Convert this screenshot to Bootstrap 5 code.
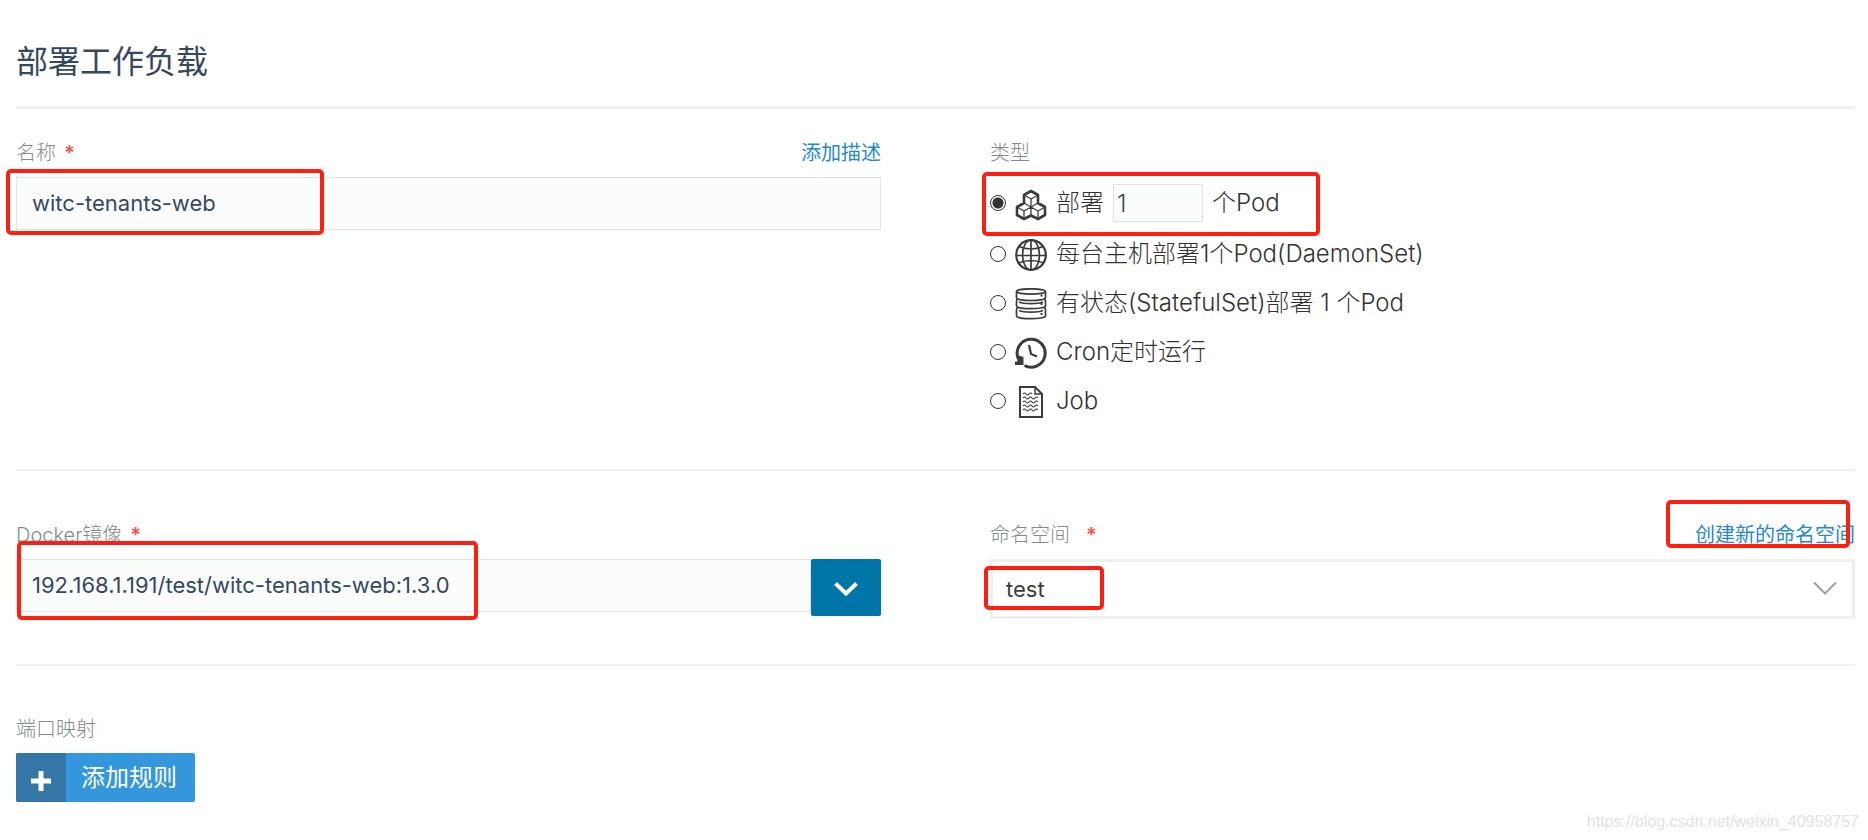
<!DOCTYPE html>
<html lang="zh-CN">
<head>
<meta charset="utf-8">
<meta name="viewport" content="width=device-width, initial-scale=1">
<title>部署工作负载</title>
<link href="https://cdn.jsdelivr.net/npm/bootstrap@5.3.0/dist/css/bootstrap.min.css" rel="stylesheet">
<style>
  body { font-family: Inter, "Noto Sans CJK SC", sans-serif; font-weight: 400; color: #3d3d3d; background: #fff; }
  .page { padding: 40px 13px 0 16px; }
  .page-title { font-size: 32px; line-height: 44px; font-weight: 400; color: #34495e; margin: 0; padding-bottom: 22px; border-bottom: 3px solid #ecf0f1; }
  .field-grid { display: grid; grid-template-columns: 1fr 1fr; column-gap: 109px; row-gap: 24px; }
  .section-line { border-bottom: 2px solid #ecf0f1; }
  .sec-first { padding: 29px 0 44px; }
  .sec-second { padding: 49px 0 45px; }
  .sec-third { padding: 48px 0 0; }
  .caption { font-size: 20px; line-height: 30px; color: #7f8c8d; font-weight: 300; }
  .caption-row { margin-bottom: 9px; }
  .req { color: #f0504e; font-weight: 600; margin-left: 8px; }
  .req-wide { margin-left: 16px; }
  .act { font-size: 20px; line-height: 30px; color: #2688cd; text-decoration: none; }
  .text-field { height: 53px; font-size: 22px; font-weight: 400; color: #34495e; background: #fbfdfd; border: 1px solid #dce4e4; border-radius: 0; padding: 0 15px 2px; }
  .pick-field { height: 60px; font-size: 22px; font-weight: 400; color: #3d3d3d; background: #fff; border: 3px solid #ecf0f1; border-radius: 0; padding: 0 56px 0 13px; appearance: none; }
  .pick-arrow { right: 18px; top: 22px; pointer-events: none; }
  .drop-btn { width: 70px; height: 57px; background: #0075a8; border: 0; border-radius: 2px; color: #fff; }
  .kind { height: 49px; font-size: 24px; line-height: 32px; font-weight: 300; color: #333; }
  .kind-first { height: 52px; }
  .kind input[type=radio] { appearance: none; width: 16px; height: 16px; margin: 0 9px 0 0; border: 1px solid #333; border-radius: 50%; background: #fff; flex: none; }
  .kind input[type=radio]:checked { background: radial-gradient(circle, #333 5px, #fff 6px); }
  .kind svg { width: 32px; height: 32px; margin-right: 9px; margin-top: 3px; flex: none; }
  .count-field { width: 90px; height: 38px; font-size: 24px; font-weight: 300; color: #34495e; background: #fbfdfd; border: 1px solid #dce4e4; border-radius: 0; padding: 0 3px; margin: 0 9px; appearance: textfield; }
  .count-field::-webkit-inner-spin-button { appearance: none; }
  .rule-btn { height: 49px; font-size: 24px; font-weight: 400; line-height: 50px; color: #fff; background: #3497db; border: 0; border-radius: 2px; overflow: hidden; }
  .rule-btn .plus { width: 50px; background: #3477a7; padding-top: 7px; }
  .rule-btn .txt { padding: 0 18px 0 15px; }
  .hl { position: absolute; border: 4px solid #ff1e10; border-radius: 5px; pointer-events: none; z-index: 2; }
  .hl-name { left: -10px; top: 31px; width: 318px; height: 66px; }
  .hl-kind { left: -8px; top: 34px; width: 338px; height: 64px; }
  .hl-image { left: 1px; top: 21px; width: 461px; height: 79px; }
  .hl-space { left: -6px; top: 46px; width: 120px; height: 44px; }
  .hl-create { right: 5px; top: -20px; width: 184px; height: 48px; }
  .site-mark { font-family: "Liberation Sans", sans-serif; font-size: 16px; font-weight: 400; line-height: 20px; color: #e2e2e2; padding: 10px 9px 0 0; }
  @media (max-width: 900px) { .field-grid { grid-template-columns: 1fr; } }
</style>
</head>
<body>
<main>
<form class="page">
  <h1 class="page-title">部署工作负载</h1>

  <section class="field-grid section-line sec-first">
    <div class="position-relative">
      <div class="caption-row d-flex justify-content-between">
        <label class="caption" for="name">名称<span class="req">*</span></label>
        <a class="act" href="#">添加描述</a>
      </div>
      <input id="name" type="text" class="text-field form-control" value="witc-tenants-web">
      <div class="hl hl-name"></div>
    </div>
    <div class="position-relative">
      <div class="caption-row caption">类型</div>
      <div class="kind kind-first d-flex align-items-center">
        <input type="radio" name="kind" id="k1" checked>
        <label class="d-flex align-items-center" for="k1">
          <svg viewBox="0 0 32 32" fill="none" stroke="#3b3b3b" stroke-linejoin="round"><path stroke-width="2.600" d="M16 2l7 4v8l7 4v8l-7 4-7-3.500L9 30l-7-4v-8l7-4V6z"/><path stroke-width="1.300" d="M9 6l7 4 7-4M16 10v8M9 14l7 4 7-4M2 18l7 4 7-4M9 22v8M16 18v8M16 18l7 4 7-4M23 22v8"/></svg>
          <span>部署</span>
        </label>
        <input type="number" class="count-field" value="1" aria-label="Pod 数量"><span>个Pod</span>
      </div>
      <div class="kind d-flex align-items-center">
        <input type="radio" name="kind" id="k2">
        <label class="d-flex align-items-center" for="k2">
          <svg viewBox="0 0 32 32" fill="none" stroke="#3b3b3b" stroke-width="1.700"><circle cx="16" cy="16" r="14.800" stroke-width="2.200"/><ellipse cx="16" cy="16" rx="8.500" ry="15"/><path d="M16 1v30M1 16.500h30M4 7.500q12 5 24 0M3.500 24q12.500-5 25 0"/></svg>
          <span>每台主机部署1个Pod(DaemonSet)</span>
        </label>
      </div>
      <div class="kind d-flex align-items-center">
        <input type="radio" name="kind" id="k3">
        <label class="d-flex align-items-center" for="k3">
          <svg viewBox="0 0 32 32" fill="none" stroke="#3b3b3b" stroke-width="1.700"><ellipse cx="16" cy="3.500" rx="14.500" ry="2.700"/><path d="M1.500 3.500v6.300c0 3.600 29 3.600 29 0V3.500M3 11.500q-1.500 0-1.500 1.500v5c0 3.600 29 3.600 29 0v-5q0-1.500-1.500-1.500M3 20q-1.500 0-1.500 1.500V28c0 3.600 29 3.600 29 0v-6.500q0-1.500-1.500-1.500M4 14c5 2.200 19 2.200 24 0M4 22.500c5 2.200 19 2.200 24 0"/><path stroke-width="2" d="M25.500 7.500h2M25.500 16h2M25.500 26h2"/></svg>
          <span>有状态(StatefulSet)部署 1 个Pod</span>
        </label>
      </div>
      <div class="kind d-flex align-items-center">
        <input type="radio" name="kind" id="k4">
        <label class="d-flex align-items-center" for="k4">
          <svg viewBox="0 0 32 32" fill="none" stroke="#3b3b3b" stroke-width="3"><path d="M3.200 21.500A14 14 0 1 1 9.500 28.500"/><path stroke-width="2.200" d="M14 8l2 9 6 2.500"/><path fill="#3b3b3b" stroke="none" d="M1.500 18l7 2v8H0v-3.500h2.500z"/></svg>
          <span>Cron定时运行</span>
        </label>
      </div>
      <div class="kind d-flex align-items-center">
        <input type="radio" name="kind" id="k5">
        <label class="d-flex align-items-center" for="k5">
          <svg viewBox="0 0 32 32" fill="none" stroke="#3b3b3b" stroke-width="2"><path d="M5 1h15l7 7v23H5z"/><path stroke-width="1.500" d="M20 1v7h7"/><path stroke-width="1.200" d="M8 8q1.500-2 3 0t3 0 3 0M8 12q1.500-2 3 0t3 0 3 0 3 0 3 0M8 16q1.500-2 3 0t3 0 3 0 3 0 3 0M8 20q1.500-2 3 0t3 0 3 0 3 0 3 0M8 24q1.500-2 3 0t3 0 3 0 3 0 3 0"/></svg>
          <span>Job</span>
        </label>
      </div>
      <div class="hl hl-kind"></div>
    </div>
  </section>

  <section class="field-grid section-line sec-second">
    <div class="position-relative">
      <div class="caption-row"><label class="caption d-block" for="image">Docker镜像<span class="req">*</span></label></div>
      <div class="d-flex align-items-start">
        <input id="image" type="text" class="text-field form-control" value="192.168.1.191/test/witc-tenants-web:1.3.0">
        <button type="button" class="drop-btn flex-shrink-0" aria-label="选择镜像">
          <svg width="26" height="18" viewBox="0 0 26 18" fill="none" stroke="#fff" stroke-width="4"><path d="M2.500 3.500L13 13.500l10.500-10"/></svg>
        </button>
      </div>
      <div class="hl hl-image"></div>
    </div>
    <div class="position-relative">
      <div class="caption-row d-flex justify-content-between">
        <label class="caption" for="space">命名空间<span class="req req-wide">*</span></label>
        <a class="act" href="#">创建新的命名空间</a>
      </div>
      <div class="position-relative">
        <select id="space" class="pick-field w-100"><option>test</option></select>
        <svg class="pick-arrow position-absolute" width="24" height="15" viewBox="0 0 24 15" fill="none" stroke="#98a1a8" stroke-width="2"><path d="M1 1.500l11 11 11-11"/></svg>
      </div>
      <div class="hl hl-space"></div>
      <div class="hl hl-create"></div>
    </div>
  </section>

  <section class="sec-third">
    <div class="caption-row caption">端口映射</div>
    <button type="button" class="rule-btn d-inline-flex p-0">
      <span class="plus d-flex align-items-center justify-content-center align-self-stretch"><svg width="20" height="20" viewBox="0 0 20 20"><path fill="#fff" d="M7.500 0h5v7.500H20v5h-7.500V20h-5v-7.500H0v-5h7.500z"/></svg></span>
      <span class="txt">添加规则</span>
    </button>
  </section>
</form>
<div class="site-mark text-end">https://blog.csdn.net/weixin_40958757</div>
</main>
<script src="https://cdn.jsdelivr.net/npm/bootstrap@5.3.0/dist/js/bootstrap.bundle.min.js"></script>
</body>
</html>
